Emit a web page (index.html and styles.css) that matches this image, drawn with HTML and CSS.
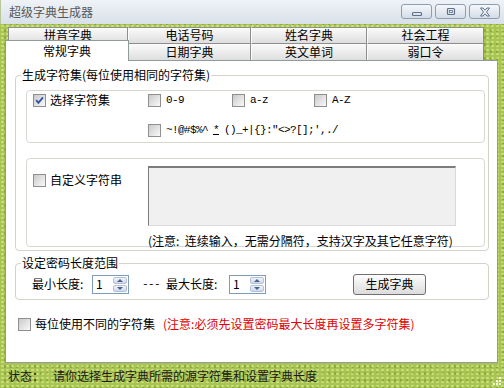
FILE: index.html
```html
<!DOCTYPE html>
<html lang="zh-CN">
<head>
  <meta charset="UTF-8" />
  <title>超级字典生成器</title>
  <link rel="stylesheet" href="styles.css">
</head>
<body>
  <div class="window">
    <div class="titlebar">
      <span class="title">超级字典生成器</span>
      <div class="caption-buttons">
        <button class="cap-btn" title="最小化">
          <svg width="14" height="10" viewBox="0 0 14 10"><rect x="2.5" y="5.5" width="9" height="3" rx="1" fill="none" stroke="#5f7189" stroke-width="1.2"/></svg>
        </button>
        <button class="cap-btn" title="最大化">
          <svg width="14" height="10" viewBox="0 0 14 10"><rect x="3.5" y="1.5" width="7" height="6" rx="1" fill="none" stroke="#5f7189" stroke-width="1.2"/><rect x="5.5" y="3.5" width="3" height="2" fill="none" stroke="#5f7189" stroke-width="0.8"/></svg>
        </button>
        <button class="cap-btn" title="关闭">
          <svg width="16" height="10" viewBox="0 0 16 10"><path d="M3.5 1 L6 1 L8 3.2 L10 1 L12.5 1 L9.5 5 L12.5 9 L10 9 L8 6.8 L6 9 L3.5 9 L6.5 5 Z" fill="#eef2f7" stroke="#5f7189" stroke-width="1"/></svg>
        </button>
      </div>
    </div>

    <div class="client">
      <div class="tabs">
        <div class="tab-row">
          <div class="tab">拼音字典</div>
          <div class="tab">电话号码</div>
          <div class="tab">姓名字典</div>
          <div class="tab">社会工程</div>
        </div>
        <div class="tab-row">
          <div class="tab active">常规字典</div>
          <div class="tab">日期字典</div>
          <div class="tab">英文单词</div>
          <div class="tab">弱口令</div>
        </div>
      </div>

      <div class="panel">
        <fieldset class="group group-charset">
          <legend>生成字符集(每位使用相同的字符集)</legend>

          <div class="box box-select">
            <label class="check">
              <span class="cb checked"><svg width="11" height="11" viewBox="0 0 11 11"><path d="M2.2 5.2 L4.4 7.8 L9 2.4" fill="none" stroke="#3556a3" stroke-width="1.9"/></svg></span>
              选择字符集
            </label>
            <label class="check mono"><span class="cb"></span>0-9</label>
            <label class="check mono"><span class="cb"></span>a-z</label>
            <label class="check mono"><span class="cb"></span>A-Z</label>
            <label class="check mono symbols"><span class="cb"></span>~!@#$%^<u>*</u>()_+|{}:"&lt;&gt;?[];',./</label>
          </div>

          <div class="box box-custom">
            <label class="check custom-label"><span class="cb"></span>自定义字符串</label>
            <div class="textarea"></div>
            <p class="note">(注意:&nbsp;&nbsp;连续输入，无需分隔符，支持汉字及其它任意字符)</p>
          </div>
        </fieldset>

        <fieldset class="group group-length">
          <legend>设定密码长度范围</legend>
          <div class="length-row">
            <span class="len-label">最小长度:</span>
            <div class="spinner">
              <span class="spin-value">1</span>
              <div class="spin-btns">
                <span class="spin-up"></span>
                <span class="spin-down"></span>
              </div>
            </div>
            <span class="dash mono">---</span>
            <span class="len-label max">最大长度:</span>
            <div class="spinner">
              <span class="spin-value">1</span>
              <div class="spin-btns">
                <span class="spin-up"></span>
                <span class="spin-down"></span>
              </div>
            </div>
            <button class="btn-generate">生成字典</button>
          </div>
        </fieldset>

        <div class="multi-row">
          <label class="check"><span class="cb"></span>每位使用不同的字符集</label>
          <span class="warn">(注意:必须先设置密码最大长度再设置多字符集)</span>
        </div>
      </div>

      <div class="statusbar">
        <span class="status-key">状态：</span>
        <span class="status-text">请你选择生成字典所需的源字符集和设置字典长度</span>
        <svg class="grip" width="10" height="10" viewBox="0 0 10 10">
          <g fill="#f3f7e4">
            <rect x="7" y="1" width="2" height="2"/>
            <rect x="4" y="4" width="2" height="2"/>
            <rect x="7" y="4" width="2" height="2"/>
            <rect x="1" y="7" width="2" height="2"/>
            <rect x="4" y="7" width="2" height="2"/>
            <rect x="7" y="7" width="2" height="2"/>
          </g>
        </svg>
      </div>
    </div>
  </div>
</body>
</html>
```

FILE: styles.css
```css
* {
  box-sizing: border-box;
  margin: 0;
  padding: 0;
}

body {
  width: 504px;
  height: 388px;
  overflow: hidden;
  font-family: "Noto Sans CJK SC", "Liberation Sans", sans-serif;
  font-size: 12px;
  color: #000;
  background: #a8c552;
}

.window {
  width: 504px;
  height: 388px;
  display: flex;
  flex-direction: column;
}

/* title bar */
.titlebar {
  height: 24px;
  flex: none;
  display: flex;
  align-items: center;
  padding: 0 4px 0 8px;
  background: linear-gradient(#eff3f7, #d8e0e8);
  border-left: 1px solid #b7c79a;
}

.title {
  flex: 1;
  color: #575757;
  line-height: 16px;
}

.caption-buttons {
  display: flex;
  gap: 3px;
  margin-top: -1px;
}

.cap-btn {
  width: 31px;
  height: 15px;
  border: 1px solid #8d9eb3;
  border-radius: 3px;
  background: linear-gradient(#f5f8fb, #d3dce7);
  display: flex;
  align-items: center;
  justify-content: center;
}

/* client area with textured green frame */
.client {
  flex: 1;
  display: flex;
  flex-direction: column;
  padding: 0 6px 0 5px;
  background-color: #a8c552;
  background-image:
    radial-gradient(rgba(236, 246, 170, 0.55) 1px, transparent 1.6px),
    radial-gradient(rgba(100, 132, 28, 0.4) 1px, transparent 1.6px);
  background-size: 5px 4px, 6px 7px;
  background-position: 0 0, 2px 3px;
}

/* tabs */
.tabs {
  height: 36px;
  flex: none;
  padding: 3px 0 0 3px;
}

.tab-row {
  display: grid;
  grid-template-columns: 120px 123px 116px 117px;
  height: 16px;
}

.tab-row + .tab-row {
  height: 17px;
}

.tab {
  border-top: 1px solid #8e8e8e;
  border-right: 1px solid #8e8e8e;
  border-left: 1px solid #fbfbfb;
  background: linear-gradient(#fbfbfb, #dedede);
  text-align: center;
  line-height: 14px;
}

.tab-row + .tab-row .tab {
  line-height: 16px;
}

.tab:first-child {
  border-left-color: #8e8e8e;
}

.tab-row + .tab-row .tab.active {
  position: relative;
  z-index: 1;
  margin: -3px -1px -1px -3px;
  background: #fff;
  border: 1px solid #919b9c;
  border-bottom: none;
  line-height: 20px;
}

/* panel */
.panel {
  flex: 1;
  background: #fff;
  border: 1px solid #919b9c;
  padding: 0 8px 0 9px;
}

.group {
  border: 1px solid #d3d3ca;
  border-radius: 4px;
  padding: 0 3px 3px 10px;
  min-width: 0;
}

.group legend {
  margin-left: -5px;
  padding: 0 1px;
  line-height: 16px;
}

.group-charset {
  margin-top: 6px;
}

.box {
  border: 1px solid #d8d8d0;
  border-radius: 4px;
}

.box-select {
  height: 53px;
  margin-top: 7px;
  padding: 1px 0 0 6px;
  display: grid;
  grid-template-columns: 115px 84px 82px auto;
  grid-template-rows: 16px 16px;
  row-gap: 14px;
}

.symbols {
  grid-column: 2 / 5;
}

.box-custom {
  height: 89px;
  margin-top: 15px;
  padding-left: 6px;
  display: grid;
  grid-template-columns: 115px auto;
  align-content: start;
}

.custom-label {
  margin-top: 13px;
  align-self: start;
}

.textarea {
  width: 308px;
  height: 60px;
  margin-top: 7px;
  background: #f0f0f0;
  border-top: 2px solid #7c7c7c;
  border-left: 1px solid #7c7c7c;
  border-right: 1px solid #dadada;
  border-bottom: 1px solid #dadada;
}

.note {
  grid-column: 2;
  margin-top: 8px;
  line-height: 14px;
  white-space: nowrap;
}

/* checkbox */
.check {
  display: flex;
  align-items: center;
  gap: 4px;
  height: 16px;
  line-height: 16px;
  white-space: nowrap;
}

.cb {
  width: 13px;
  height: 13px;
  flex: none;
  border: 1px solid #8f8f8f;
  background: linear-gradient(135deg, #cacaca, #f9f9f9);
  display: flex;
  align-items: center;
  justify-content: center;
}

.mono {
  font-family: "Liberation Mono", "DejaVu Sans Mono", monospace;
  font-size: 11px;
  letter-spacing: -0.6px;
}

.check.mono {
  gap: 5px;
}

/* length group */
.group-length {
  margin-top: 4px;
  padding-top: 3px;
  padding-bottom: 5px;
}

.length-row {
  display: flex;
  align-items: center;
  height: 20px;
  padding-left: 6px;
}

.len-label {
  width: 60px;
  line-height: 16px;
}

.len-label.max {
  width: 63px;
}

.spinner {
  width: 37px;
  height: 19px;
  border: 1px solid #7f9db9;
  background: #fff;
  display: flex;
}

.spin-value {
  flex: 1;
  padding-left: 3px;
  line-height: 16px;
}

.spin-btns {
  width: 14px;
  margin: 1px;
  display: flex;
  flex-direction: column;
  gap: 1px;
}

.spin-up,
.spin-down {
  flex: 1;
  border: 1px solid #b3c2d9;
  border-radius: 2px;
  background: linear-gradient(#f0f4fb, #cdd8ec);
  display: flex;
  align-items: center;
  justify-content: center;
}

.spin-up::after,
.spin-down::after {
  content: "";
  border-left: 3px solid transparent;
  border-right: 3px solid transparent;
}

.spin-up::after {
  border-bottom: 3px solid #4d6185;
}

.spin-down::after {
  border-top: 3px solid #4d6185;
}

.dash {
  margin: 0 6px 0 13px;
  width: 18px;
}

.btn-generate {
  margin-left: 87px;
  width: 73px;
  height: 21px;
  border: 1px solid #6f6f6f;
  border-radius: 3px;
  background: linear-gradient(#fdfdfd, #dcdcdc);
  font-family: inherit;
  font-size: 12px;
  line-height: 18px;
  color: #000;
}

/* bottom option */
.multi-row {
  margin-top: 16px;
  padding-left: 3px;
  display: flex;
  align-items: center;
  height: 16px;
}

.warn {
  margin-left: 8px;
  color: #e10000;
  line-height: 16px;
  white-space: nowrap;
}

/* status bar */
.statusbar {
  height: 25px;
  flex: none;
  display: flex;
  align-items: center;
  padding-left: 3px;
}

.status-key {
  width: 45px;
  color: #1a1a1a;
}

.status-text {
  flex: 1;
  color: #1a1a1a;
}

.grip {
  align-self: flex-end;
  margin: 0 -4px 2px 0;
}
```
